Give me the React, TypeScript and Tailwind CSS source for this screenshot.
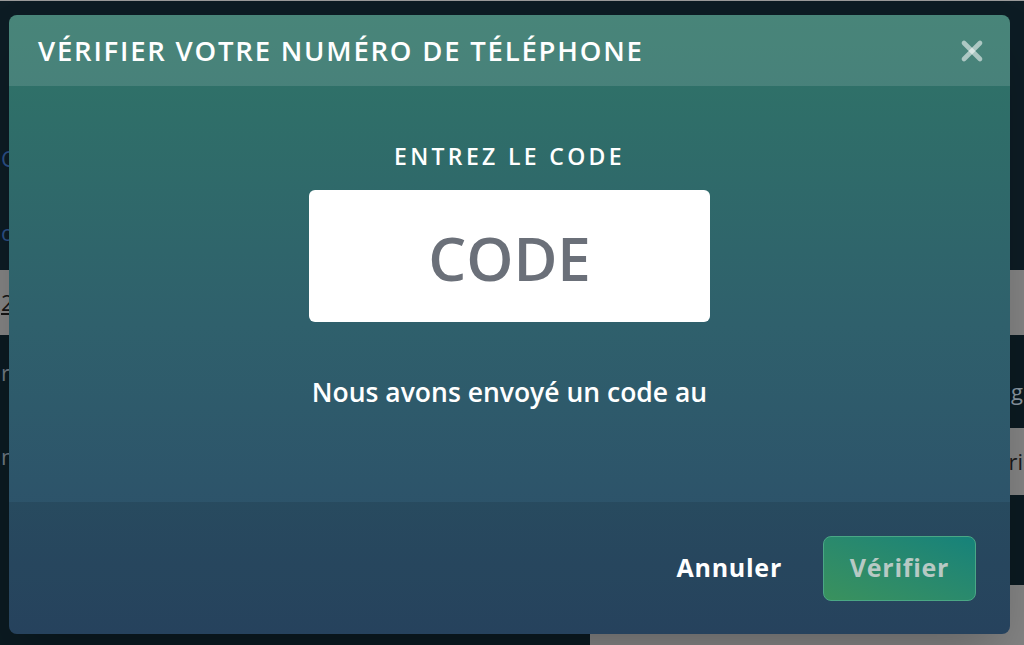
import { X } from "lucide-react";

export default function App() {
  return (
    <div className="relative w-[1024px] h-[645px] overflow-hidden bg-[#0d1c24] font-['Open_Sans',sans-serif]">
      {/* Backdrop page (dimmed) */}
      <div className="flex flex-col h-full">
        <div className="h-px bg-[#9a9a9a]" />
        <div className="h-[269px] flex flex-col pl-px pt-[142px] text-[22px] leading-[30px]">
          <span className="text-[#2c4f86]">Code</span>
          <span className="mt-[44px] text-[#2c4f86]">ou</span>
        </div>
        <div className="h-[65px] bg-[#838383] flex items-center pl-px text-[22px] text-[#161616]">
          <span className="underline">2</span>
        </div>
        <div className="flex flex-1">
          <div className="flex-1 bg-[#0b1a21] flex flex-col pl-px pt-[22px] text-[22px] leading-[30px] text-[#6f7880]">
            <span>r</span>
            <span className="mt-[54px]">n</span>
          </div>
          <div className="w-[434px] flex flex-col">
            <div className="h-[93px] bg-[#0b1a21] flex items-end justify-end pb-[20px] pr-px text-[22px] text-[#8a96a0]">
              <span>ng</span>
            </div>
            <div className="h-[67px] bg-[#838383] flex items-center justify-end pr-px text-[22px] text-[#1b1b1b]">
              <span>ri</span>
            </div>
            <div className="h-[90px] bg-[#0b1a21]" />
            <div className="flex-1 bg-[#838383]" />
          </div>
        </div>
      </div>

      {/* Modal */}
      <div className="absolute left-[9px] top-[15px] w-[1001px] h-[619px] rounded-lg overflow-hidden shadow-2xl bg-gradient-to-b from-[#2f7567] via-[#2f606c] to-[#2b4a68] flex flex-col">
        {/* Header */}
        <div className="h-[71px] shrink-0 bg-white/12 flex items-center justify-between pl-[29px] pr-[22px]">
          <h2 className="text-[27.5px] font-semibold tracking-[0.065em] text-white">
            VÉRIFIER VOTRE NUMÉRO DE TÉLÉPHONE
          </h2>
          <button className="text-white/55">
            <X className="w-[32px] h-[32px]" strokeWidth={3.5} />
          </button>
        </div>

        {/* Body */}
        <div className="flex-1 flex flex-col items-center pt-[55px]">
          <p className="text-[23px] leading-[30px] font-semibold tracking-[0.145em] text-white">
            ENTREZ LE CODE
          </p>
          <input
            placeholder="CODE"
            className="mt-[19px] w-[401px] h-[132px] rounded-md bg-white text-center text-[60px] font-semibold pt-[3px] text-gray-700 placeholder:text-[#6b7079] outline-none"
          />
          <p className="mt-[54px] text-[26.5px] leading-[32px] font-semibold text-white">
            Nous avons envoyé un code au
          </p>
        </div>

        {/* Footer */}
        <div className="h-[132px] shrink-0 bg-black/10 flex items-center justify-end gap-[41px] pr-[34px]">
          <button className="text-[25px] font-bold tracking-[0.03em] text-white">
            Annuler
          </button>
          <button className="w-[153px] h-[65px] rounded-lg border border-[#4aa785] bg-gradient-to-tr from-[#3a915d] to-[#15827a] text-[25px] font-bold tracking-[0.03em] text-[#b7c9c4]">
            Vérifier
          </button>
        </div>
      </div>
    </div>
  );
}
